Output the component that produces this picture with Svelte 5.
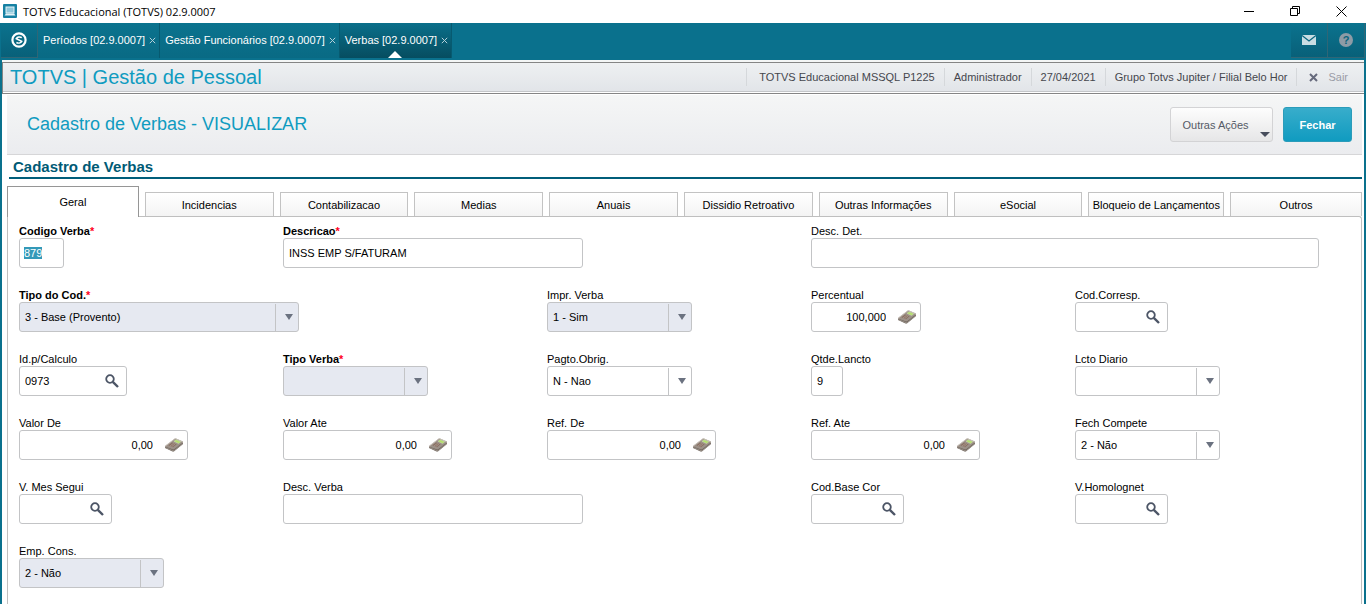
<script>
    import { onMount } from "svelte";

    let codeInput;

    const windows = [
        { name: "Períodos [02.9.0007]" },
        { name: "Gestão Funcionários [02.9.0007]" },
        { name: "Verbas [02.9.0007]", active: true },
    ];

    const session = [
        "TOTVS Educacional MSSQL P1225",
        "Administrador",
        "27/04/2021",
        "Grupo Totvs Jupiter / Filial Belo Hor",
    ];

    const folders = [
        "Geral",
        "Incidencias",
        "Contabilizacao",
        "Medias",
        "Anuais",
        "Dissidio Retroativo",
        "Outras Informações",
        "eSocial",
        "Bloqueio de Lançamentos",
        "Outros",
    ];
    let folder = "Geral";

    // col is the grid column where the field starts
    const rows = [
        [
            { id: "cod", label: "Codigo Verba", type: "text", value: "879", width: 45, col: 1, required: true, first: true },
            { id: "desc", label: "Descricao", type: "text", value: "INSS EMP S/FATURAM", width: 300, col: 2, required: true },
            { id: "descdet", label: "Desc. Det.", type: "text", value: "", width: 508, col: 4 },
        ],
        [
            { id: "tipocod", label: "Tipo do Cod.", type: "combo", value: "3 - Base (Provento)", width: 280, col: 1, required: true, locked: true },
            { id: "impr", label: "Impr. Verba", type: "combo", value: "1 - Sim", width: 145, col: 3, locked: true },
            { id: "perc", label: "Percentual", type: "number", value: "100,000", width: 110, col: 4 },
            { id: "corresp", label: "Cod.Corresp.", type: "search", value: "", width: 93, col: 5 },
        ],
        [
            { id: "idcalc", label: "Id.p/Calculo", type: "search", value: "0973", width: 108, col: 1 },
            { id: "tipo", label: "Tipo Verba", type: "combo", value: "", width: 145, col: 2, required: true, locked: true },
            { id: "pagto", label: "Pagto.Obrig.", type: "combo", value: "N - Nao", width: 145, col: 3 },
            { id: "qtde", label: "Qtde.Lancto", type: "text", value: "9", width: 32, col: 4 },
            { id: "lcto", label: "Lcto Diario", type: "combo", value: "", width: 145, col: 5 },
        ],
        [
            { id: "valde", label: "Valor De", type: "number", value: "0,00", width: 169, col: 1 },
            { id: "valate", label: "Valor Ate", type: "number", value: "0,00", width: 169, col: 2 },
            { id: "refde", label: "Ref. De", type: "number", value: "0,00", width: 169, col: 3 },
            { id: "refate", label: "Ref. Ate", type: "number", value: "0,00", width: 169, col: 4 },
            { id: "fech", label: "Fech Compete", type: "combo", value: "2 - Não", width: 145, col: 5 },
        ],
        [
            { id: "messeg", label: "V. Mes Segui", type: "search", value: "", width: 93, col: 1 },
            { id: "descverba", label: "Desc. Verba", type: "text", value: "", width: 300, col: 2 },
            { id: "base", label: "Cod.Base Cor", type: "search", value: "", width: 93, col: 4 },
            { id: "homolog", label: "V.Homolognet", type: "search", value: "", width: 93, col: 5 },
        ],
        [
            { id: "emp", label: "Emp. Cons.", type: "combo", value: "2 - Não", width: 145, col: 1, locked: true },
        ],
    ];

    onMount(() => {
        codeInput = document.getElementById("cod");
        codeInput.focus();
        codeInput.select();
    });
</script>

<div class="window">
    <div class="titlebar">
        <svg class="app-icon" width="14" height="14" viewBox="0 0 14 14">
            <rect width="14" height="14" rx="1" fill="#1681a3" />
            <rect x="3" y="3" width="8" height="6" fill="#8cc6da" stroke="#e4f3f8" />
            <path d="M1.500 11.500L3 9.500h8l1.500 2z" fill="#e4f3f8" />
        </svg>
        <span class="window-name">TOTVS Educacional (TOTVS) 02.9.0007</span>
        <div class="window-buttons">
            <button aria-label="Minimizar">
                <svg width="11" height="11" viewBox="0 0 11 11"><path d="M0 5.500h10" stroke="#000" /></svg>
            </button>
            <button aria-label="Restaurar">
                <svg width="11" height="11" viewBox="0 0 11 11" fill="none" stroke="#000">
                    <path d="M.5 2.500h7v7h-7zM2.500 2.500v-2h7v7h-2" />
                </svg>
            </button>
            <button aria-label="Fechar janela">
                <svg width="11" height="11" viewBox="0 0 11 11"><path d="M.5 .5l10 10M10.500 .5l-10 10" stroke="#000" /></svg>
            </button>
        </div>
    </div>

    <nav class="topbar">
        <button class="tool home" aria-label="Início">
            <svg width="16" height="16" viewBox="0 0 16 16" fill="none" stroke="#fff">
                <circle cx="8" cy="8" r="6.600" stroke-width="2.200" />
                <path d="M10.800 5.600C9 4.600 6.500 4.800 5.300 6.600l5.400 2.800C9.800 11.200 7.200 11.400 5.400 10.500" stroke-width="1.600" />
            </svg>
        </button>
        {#each windows as win}
            <div class="win-tab" class:active={win.active}>
                <a href="#top">{win.name}</a>
                <button class="close" aria-label="Fechar {win.name}">
                    <svg width="7" height="7" viewBox="0 0 7 7"><path d="M.8 .8l5.400 5.400M6.200 .8L.8 6.200" stroke="#b5d0d9" /></svg>
                </button>
                {#if win.active}
                    <svg class="pointer" width="14" height="7" viewBox="0 0 14 7"><path d="M0 7L7 0l7 7z" fill="#fff" /></svg>
                {/if}
            </div>
        {/each}
        <div class="tools">
            <button class="tool" aria-label="Mensagens">
                <svg width="14" height="10" viewBox="0 0 14 10">
                    <rect width="14" height="10" fill="#c9dde3" />
                    <path d="M0 .5l7 5.500 7-5.500" fill="none" stroke="#0a6680" stroke-width="1.300" />
                </svg>
            </button>
            <button class="tool help" aria-label="Ajuda"><span>?</span></button>
        </div>
    </nav>

    <header class="module">
        <h1>TOTVS | Gestão de Pessoal</h1>
        <ul>
            {#each session as item}
                <li>{item}</li>
            {/each}
            <li>
                <a class="exit" href="#sair">
                    <svg width="9" height="9" viewBox="0 0 9 9"><path d="M1 1l7 7M8 1L1 8" stroke="#666a7c" stroke-width="2" /></svg>
                    Sair
                </a>
            </li>
        </ul>
    </header>

    <main>
        <div class="page-head">
            <h2>Cadastro de Verbas - VISUALIZAR</h2>
            <button class="btn more">
                Outras Ações
                <svg width="10" height="5" viewBox="0 0 10 5"><path d="M0 0h10L5 5z" fill="#474d5c" /></svg>
            </button>
            <button class="btn primary">Fechar</button>
        </div>

        <h3>Cadastro de Verbas</h3>

        <div class="folders" role="tablist">
            {#each folders as name}
                <button
                    class="folder"
                    class:selected={folder === name}
                    role="tab"
                    aria-selected={folder === name}
                    on:click={() => (folder = name)}>{name}</button
                >
            {/each}
        </div>

        <form class="panel">
            {#each rows as row}
                <div class="row">
                    {#each row as field}
                        <div class="field" style="grid-column: {field.col}">
                            <label for={field.id} class:required={field.required}
                                >{field.label}{#if field.required}<em>*</em>{/if}</label
                            >
                            <div
                                class="control {field.type}"
                                class:locked={field.locked}
                                class:first={field.first}
                                style="width: {field.width}px"
                            >
                                {#if field.type === "combo"}
                                    <select id={field.id} disabled={field.locked}>
                                        <option>{field.value}</option>
                                    </select>
                                    <span class="arrow">
                                        <svg width="8" height="6" viewBox="0 0 8 6"><path d="M0 0h8L4 6z" fill="#6b7280" /></svg>
                                    </span>
                                {:else}
                                    <input id={field.id} type="text" value={field.value} readonly />
                                {/if}
                                {#if field.type === "search"}
                                    <button type="button" aria-label="Pesquisar {field.label}">
                                        <svg width="14" height="14" viewBox="0 0 14 14" fill="none" stroke="#4c5566">
                                            <circle cx="5" cy="5" r="3.800" stroke-width="1.800" />
                                            <path d="M7.800 7.800l5.200 5.200" stroke-width="2.400" />
                                        </svg>
                                    </button>
                                {:else if field.type === "number"}
                                    <button type="button" aria-label="Calculadora {field.label}">
                                        <svg width="18" height="14" viewBox="0 0 18 14">
                                            <path d="M0 8.500v1.500l7.500 3.500c1 .3 1.500 0 2-.5L18 6V4.500z" fill="#6f655d" />
                                            <path d="M.3 9.500l7.700 3.200c.7 .2 1.200 0 1.600-.4L17.800 5.800" fill="none" stroke="#a9a198" stroke-width=".7" />
                                            <path d="M0 8L9.500 .8c.5-.4 1-.4 1.500-.2l6.400 2.700c.8 .4 .8 .9 .2 1.400L9.500 11c-.6 .5-1.200 .6-2 .3L.4 8.800z" fill="#9c9188" />
                                            <path d="M.4 8L9.700 1c.4-.3 .8-.3 1.200-.1l6.300 2.700" fill="none" stroke="#d0c9c2" stroke-width=".8" />
                                            <path d="M9 3.300l2-1.500 4.800 1.900-2.200 1.800z" fill="#b5e06c" stroke="#cfe0b4" stroke-width=".5" />
                                            <path d="M3.400 7.200L7.200 4.400l4.400 1.900L8 9.200z" fill="#8a6f62" />
                                            <path d="M5 8l3.800-2.900M6.600 8.700l3.700-3" stroke="#b8aca2" stroke-width=".6" />
                                        </svg>
                                    </button>
                                {/if}
                            </div>
                        </div>
                    {/each}
                </div>
            {/each}
        </form>
    </main>
</div>

<style>
    :global(body) {
        margin: 0;
        background-color: #0a718d;
        font-family: "Liberation Sans", Arial, sans-serif;
        font-size: 11px;
    }
    button,
    input,
    select {
        font: inherit;
        box-sizing: border-box;
    }
    button {
        margin: 0;
        padding: 0;
        border: none;
        background: none;
        cursor: pointer;
    }
    a {
        text-decoration: none;
    }
    h1,
    h2,
    h3 {
        margin: 0;
        font-weight: normal;
    }
    svg {
        display: block;
        flex: none;
    }
    .window {
        min-height: 100vh;
        display: flex;
        flex-direction: column;
    }

    /* window title */
    .titlebar {
        display: flex;
        align-items: center;
        box-sizing: border-box;
        height: 23px;
        padding: 0 19px 1px 3px;
        background-color: #fff;
    }
    .window-name {
        margin-left: 6px;
        font-family: "Open Sans", "Noto Sans", sans-serif;
        font-size: 11px;
    }
    .window-buttons {
        display: flex;
        gap: 35px;
        margin-left: auto;
    }

    /* open programs */
    .topbar {
        display: flex;
        height: 35px;
        padding: 0 1px 2px;
    }
    .tool {
        display: flex;
        align-items: center;
        justify-content: center;
        box-sizing: border-box;
        width: 37px;
        height: 35px;
        border-right: 1px solid #2f6676;
        border-bottom: 1px solid #2f6676;
        background: linear-gradient(#0b738e, #086079);
    }
    .win-tab {
        position: relative;
        display: flex;
        align-items: center;
        box-sizing: border-box;
        height: 35px;
        padding: 0 3px 1px 5px;
        gap: 4px;
        border-right: 1px solid #075a70;
        background: linear-gradient(#0b738e, #096a84);
    }
    .win-tab.active {
        background: linear-gradient(#0a6f8a, #064d60);
    }
    .win-tab a {
        color: #fff;
    }
    .pointer {
        position: absolute;
        bottom: 0;
        left: 50%;
        margin-left: -7px;
    }
    .tools {
        display: flex;
        margin-left: auto;
    }
    .help span {
        width: 14px;
        height: 14px;
        border-radius: 50%;
        background-color: #8d9ba6;
        color: #0a647d;
        font-size: 11px;
        font-weight: bold;
        line-height: 14px;
    }

    /* module bar */
    .module {
        display: flex;
        align-items: center;
        justify-content: space-between;
        box-sizing: border-box;
        height: 32px;
        margin: 2px 2px 0;
        padding: 0 16px 2px 7px;
        border: 1px solid #858585;
        border-right: none;
        box-shadow:
            0 -2px #f4f6f6,
            inset 0 -1px #fff,
            inset 0 -2px #c4c6c9;
        background: linear-gradient(#eef0f2, #e1e4e8);
    }
    h1 {
        color: #0f9bc0;
        font-size: 20px;
        line-height: 24px;
    }
    .module ul {
        display: flex;
        margin: 0;
        padding: 0;
        list-style: none;
        color: #45474d;
    }
    .module li {
        padding: 0 9px;
        border-left: 1px solid #d5d8db;
        line-height: 18px;
    }
    .module li:first-child {
        padding-left: 12px;
    }
    .module li:last-child {
        padding: 0 0 0 12px;
    }
    .exit {
        display: flex;
        align-items: center;
        gap: 10px;
        color: #9a9ca6;
    }

    main {
        flex: 1;
        display: flex;
        flex-direction: column;
        margin: 0 2px;
        padding: 1px 2px 0 5px;
        background-color: #fff;
    }
    .page-head {
        display: flex;
        align-items: center;
        gap: 10px;
        box-sizing: border-box;
        height: 60px;
        padding: 0 10px 0 20px;
        border-bottom: 1px solid #d6d6d8;
        background: linear-gradient(#f5f6f6, #ebecef);
    }
    h2 {
        margin-right: auto;
        color: #0f9bc0;
        font-size: 18px;
    }
    .btn {
        position: relative;
        height: 35px;
        border: 1px solid #d3d3d5;
        border-radius: 3px;
    }
    .more {
        width: 103px;
        padding-right: 12px;
        color: #555a66;
        background: linear-gradient(#fdfdfd, #e6e6e7);
    }
    .more svg {
        position: absolute;
        right: 2px;
        bottom: 4px;
    }
    .primary {
        width: 69px;
        border-color: #2b9cba;
        color: #fff;
        font-weight: bold;
        background: linear-gradient(#38adcb, #109bc0);
    }
    h3 {
        margin: 0 0 7px 2px;
        padding: 4px 4px 2px;
        border-bottom: 2px solid #005e7a;
        color: #005a75;
        font-size: 15px;
        font-weight: bold;
        line-height: 16px;
    }

    .folders {
        display: grid;
        grid-template-columns: 132fr repeat(7, 129fr) 136fr 132fr;
        gap: 6px;
        align-items: end;
        height: 30px;
    }
    .folder {
        height: 24px;
        border: 1px solid #c3c3c3;
        border-bottom: none;
        color: #000;
        white-space: nowrap;
        background: linear-gradient(#fff, #f4f4f4);
    }
    .folder.selected {
        position: relative;
        height: 31px;
        margin-bottom: -1px;
        border-color: #969696;
        background: #fff;
    }

    .panel {
        flex: 1;
        display: flex;
        flex-direction: column;
        gap: 20px;
        padding: 7px 22px 0 11px;
        border: 1px solid #bfbfbf;
        border-bottom: none;
        border-top-right-radius: 3px;
    }
    .row {
        display: grid;
        grid-template-columns: repeat(5, minmax(0, 1fr));
    }
    label {
        display: block;
        line-height: 14px;
        white-space: nowrap;
    }
    label.required {
        font-weight: bold;
    }
    em {
        color: #ff0020;
        font-style: normal;
    }
    .control {
        position: relative;
        display: flex;
        align-items: center;
        box-sizing: border-box;
        height: 30px;
        border: 1px solid #c3c4c6;
        border-radius: 3px;
        background-color: #fff;
    }
    .control input,
    .control select {
        flex: 1;
        min-width: 0;
        padding: 0 0 0 5px;
        border: none;
        outline: none;
        color: #000;
        background: none;
    }
    .control select {
        appearance: none;
        height: 28px;
        opacity: 1;
    }
    .control.first input {
        padding-left: 4px;
    }
    .control input::selection {
        color: #fff;
        background-color: #3399b8;
    }
    .control.locked {
        background-color: #e6e9f1;
    }
    .arrow {
        position: absolute;
        top: 1px;
        right: 0;
        bottom: 0;
        display: flex;
        align-items: center;
        justify-content: center;
        width: 23px;
        padding: 0 0 1px 4px;
        box-sizing: border-box;
        border-left: 1px solid #c3c4c6;
        pointer-events: none;
    }
    .search button {
        padding-right: 7px;
        padding-bottom: 1px;
    }
    .number input {
        text-align: right;
    }
    .number button {
        padding: 0 4px 0 12px;
    }
</style>
